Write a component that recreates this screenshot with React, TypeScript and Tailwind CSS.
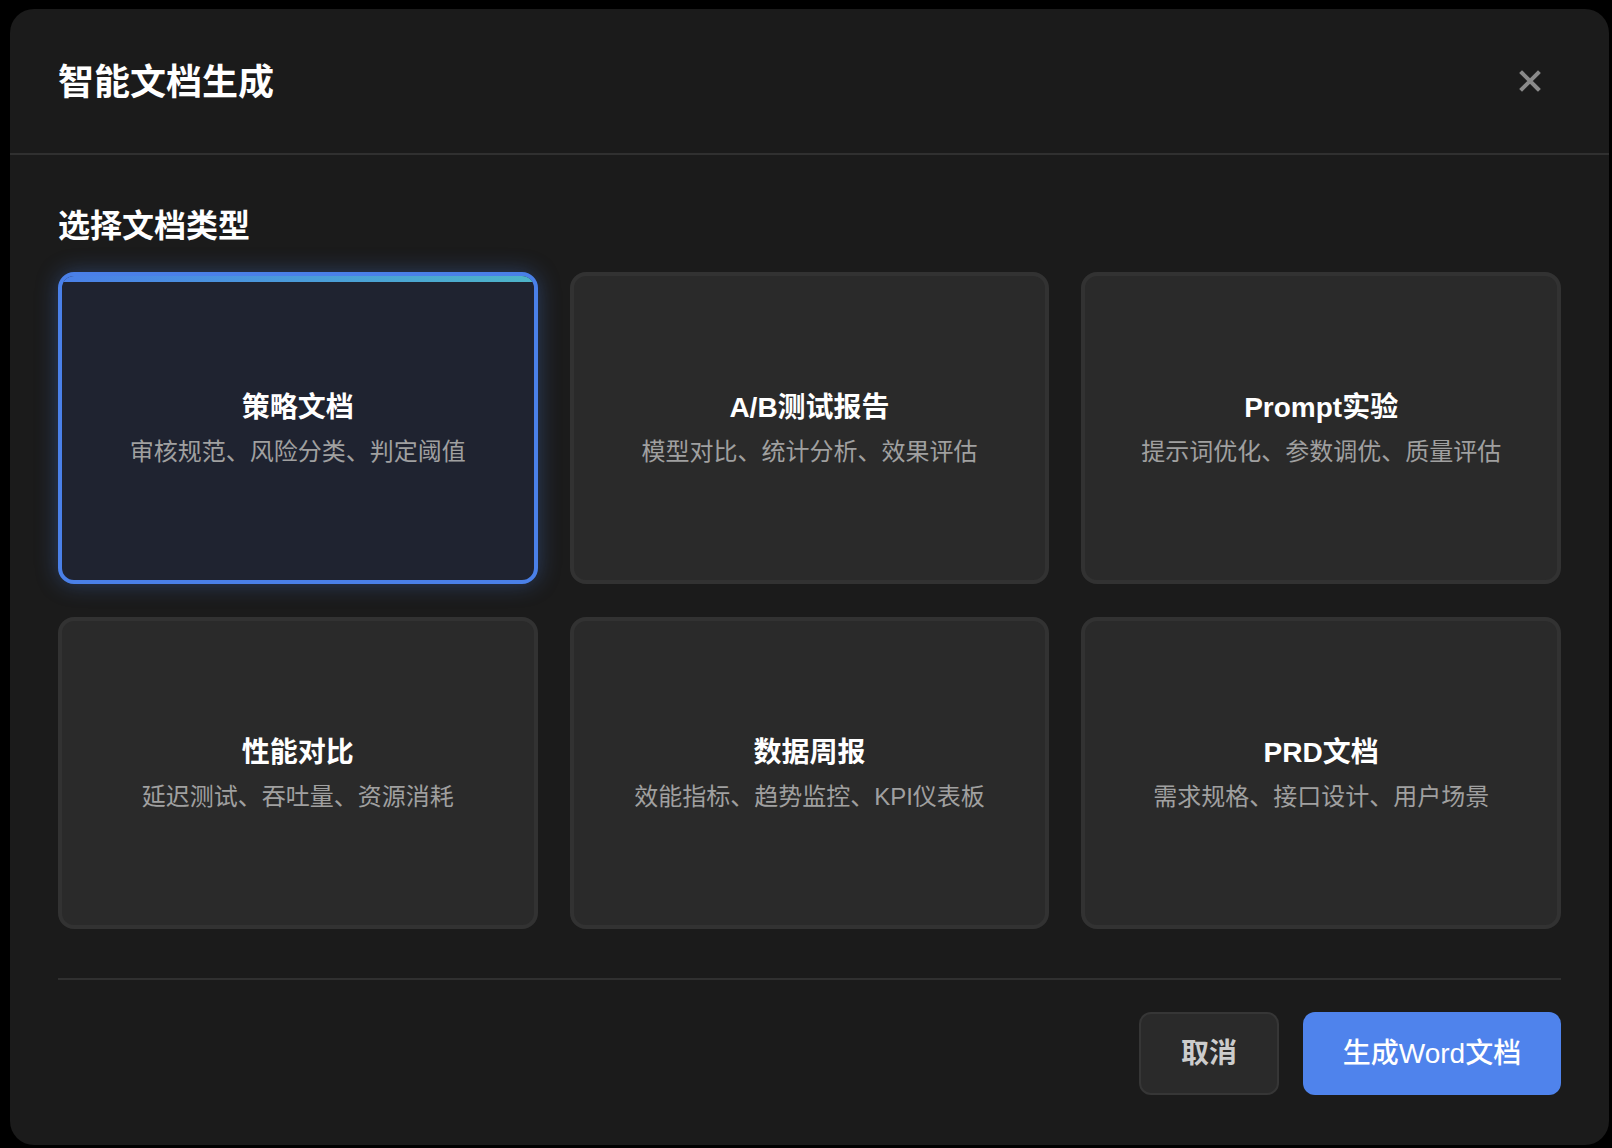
import { useState } from 'react';

type DocType = {
  id: string;
  title: string;
  desc: string;
};

const DOC_TYPES: DocType[] = [
  { id: 'policy', title: '策略文档', desc: '审核规范、风险分类、判定阈值' },
  { id: 'ab', title: 'A/B测试报告', desc: '模型对比、统计分析、效果评估' },
  { id: 'prompt', title: 'Prompt实验', desc: '提示词优化、参数调优、质量评估' },
  { id: 'perf', title: '性能对比', desc: '延迟测试、吞吐量、资源消耗' },
  { id: 'weekly', title: '数据周报', desc: '效能指标、趋势监控、KPI仪表板' },
  { id: 'prd', title: 'PRD文档', desc: '需求规格、接口设计、用户场景' },
];

const FONT = "font-['Liberation_Sans','Noto_Sans_CJK_SC',sans-serif]";

export default function App() {
  const [selected, setSelected] = useState('policy');

  return (
    <div className={`min-h-[1148px] w-full bg-black pt-[9px] pl-[10px] ${FONT}`}>
      <div className="w-[1599px] rounded-3xl bg-[#1b1b1b]">
        {/* header */}
        <div className="flex h-[146px] items-center justify-between border-b-2 border-[#303030] pl-12 pr-[68px]">
          <h1 className="mt-1 text-[36px] font-bold leading-[54px] text-white">
            智能文档生成
          </h1>
          <button className="text-[#8a8a8a]" aria-label="关闭">
            <svg width="22" height="22" viewBox="0 0 22 22" fill="none">
              <path
                d="M3 3 L19 19 M19 3 L3 19"
                stroke="currentColor"
                strokeWidth="4"
                strokeLinecap="square"
              />
            </svg>
          </button>
        </div>

        {/* body */}
        <div className="px-12 pt-[47px]">
          <h2 className="mb-[22px] text-[32px] font-bold leading-[48px] text-white">
            选择文档类型
          </h2>

          <div className="grid grid-cols-3 gap-x-8 gap-y-[33px]">
            {DOC_TYPES.map((t) => {
              const active = t.id === selected;
              return (
                <button
                  key={t.id}
                  onClick={() => setSelected(t.id)}
                  className={
                    active
                      ? 'relative flex h-[312px] flex-col items-center justify-center overflow-hidden rounded-2xl border-4 border-[#4a80e8] bg-[#1f2330] shadow-[0_0_22px_rgba(74,128,232,0.35)]'
                      : 'relative flex h-[312px] flex-col items-center justify-center overflow-hidden rounded-2xl border-4 border-[#323232] bg-[#2a2a2a]'
                  }
                >
                  {active && (
                    <div className="absolute inset-x-0 top-0 h-[6px] bg-linear-to-r from-[#4a80e8] to-[#4db4c8]" />
                  )}
                  <div className="text-[28px] font-bold leading-[42px] text-white">
                    {t.title}
                  </div>
                  <div className="mt-[5px] text-[24px] leading-[36px] text-[#a0a0a0]">
                    {t.desc}
                  </div>
                </button>
              );
            })}
          </div>

          {/* footer */}
          <div className="mt-[49px] flex justify-end gap-6 border-t-2 border-[#303030] pt-8 pb-[50px]">
            <button className="h-[83px] w-[140px] rounded-xl border-2 border-[#363636] bg-[#2a2a2a] text-[28px] font-bold text-[#cccccc]">
              取消
            </button>
            <button className="h-[83px] w-[258px] rounded-xl bg-[#4f83ec] text-[28px] font-medium text-white">
              生成Word文档
            </button>
          </div>
        </div>
      </div>
    </div>
  );
}
